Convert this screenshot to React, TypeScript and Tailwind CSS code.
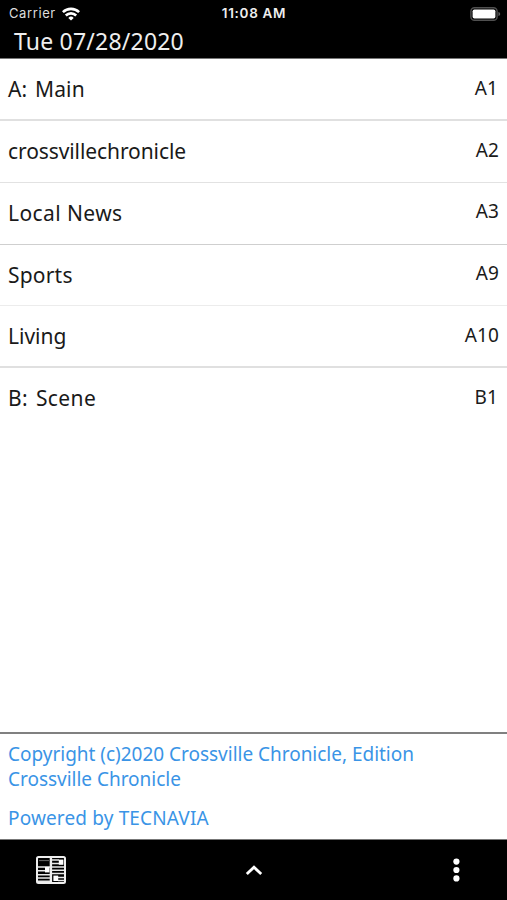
type Section = {
  title: string;
  page: string;
  titleClass: string;
  pageClass: string;
  rowClass: string;
};

const SECTIONS: Section[] = [
  { title: 'A: Main', page: 'A1', titleClass: 'tracking-[0.15px] [word-spacing:2px]', pageClass: 'pt-[14px] pr-[9px]', rowClass: 'h-[62px] border-b-2 border-[#e0e0e0]' },
  { title: 'crossvillechronicle', page: 'A2', titleClass: 'tracking-[-0.09px]', pageClass: 'pt-[14px] pr-2', rowClass: 'h-[62px] border-b border-[#e2e2e2]' },
  { title: 'Local News', page: 'A3', titleClass: 'tracking-[0.42px]', pageClass: 'pt-[13px] pr-2', rowClass: 'h-[62px] border-b border-[#cfcfcf]' },
  { title: 'Sports', page: 'A9', titleClass: 'tracking-[0.2px]', pageClass: 'pt-[13px] pr-2', rowClass: 'h-[61px] border-b border-[#ececec]' },
  { title: 'Living', page: 'A10', titleClass: 'tracking-[0px]', pageClass: 'pt-[14px] pr-2', rowClass: 'h-[62px] border-b-2 border-[#e0e0e0]' },
  { title: 'B: Scene', page: 'B1', titleClass: 'tracking-[0.4px] [word-spacing:2px]', pageClass: 'pt-[14px] pr-[9px]', rowClass: 'h-[62px]' },
];

function WifiIcon() {
  return (
    <svg width="18" height="14" viewBox="0 0 18 14" fill="none" stroke="white" strokeWidth="2.6">
      <path d="M0.9 5.2a11.5 11.5 0 0 1 16.2 0" />
      <path d="M3.8 8.5a7.4 7.4 0 0 1 10.4 0" />
      <path d="M9 13.6L6.3 10.9a3.9 3.9 0 0 1 5.4 0z" fill="white" stroke="none" />
    </svg>
  );
}

function BatteryIcon() {
  return (
    <svg width="31" height="14" viewBox="0 0 31 14" fill="none">
      <rect x="0.9" y="0.7" width="26.2" height="12.6" rx="3.6" stroke="#505050" strokeWidth="1.4" />
      <rect x="2.6" y="2.4" width="22.8" height="9.2" rx="1.8" fill="white" />
      <path d="M28.4 4.9v4.2c1.2-.4 1.8-1.2 1.8-2.1s-.6-1.7-1.8-2.1z" fill="#606060" />
    </svg>
  );
}

function NewspaperIcon() {
  return (
    <svg width="30" height="28" viewBox="0 0 30 28" fill="none">
      <rect x="1" y="1" width="28" height="26" rx="1.5" stroke="#eee" strokeWidth="2" />
      <path d="M14.9 1v26" stroke="#eee" strokeWidth="2.4" />
      <path d="M3 4.6h10" stroke="#666" strokeWidth="1" />
      <path d="M2 11h12M2 14.7h7M2 18.8h12M2 22h12M2 25.2h12" stroke="#e8e8e8" strokeWidth="1.5" />
      <rect x="9" y="11" width="4.5" height="5.4" fill="white" />
      <path d="M16 4h7M16 7.6h7M16 11h12M16 14.3h12M16 17.6h12M22 21.4h6M22 24.6h6" stroke="#e8e8e8" strokeWidth="1.5" />
      <rect x="22.8" y="3.6" width="4.6" height="5.2" fill="white" />
      <rect x="17.4" y="19.6" width="4.8" height="5.4" fill="white" />
    </svg>
  );
}

function Header() {
  return (
    <header className="h-[59px] border-b border-[#777] bg-black text-white">
      <div className="grid h-[27px] grid-cols-3 items-center pr-[6px] pl-[9px] font-['Inter',sans-serif] text-[13px]">
        <div className="flex items-center gap-[6px]">
          <span className="pt-px tracking-[0.6px] text-[#ddd]">Carrier</span>
          <WifiIcon />
        </div>
        <span className="pr-[2px] text-center text-[13.5px] font-semibold tracking-[0.7px] whitespace-nowrap text-[#eee]">11:08 AM</span>
        <div className="flex justify-end">
          <BatteryIcon />
        </div>
      </div>
      <h1 className="pl-[14px] text-[23px] leading-[28px] tracking-[0.2px] text-[#eee]">Tue 07/28/2020</h1>
    </header>
  );
}

function SectionRow({ section }: { section: Section }) {
  return (
    <li className={`flex items-start justify-between pl-2 ${section.rowClass}`}>
      <span className={`pt-[15px] text-[21px] leading-[30px] ${section.titleClass}`}>{section.title}</span>
      <span className={`text-[19px] leading-[30px] tracking-[0.1px] ${section.pageClass}`}>{section.page}</span>
    </li>
  );
}

export default function App() {
  return (
    <div className="flex h-[900px] w-[507px] flex-col overflow-hidden bg-white font-['Noto_Sans',sans-serif] text-[#1a1a1a]">
      <Header />
      <ul className="flex-1">
        {SECTIONS.map((section) => (
          <SectionRow key={section.title} section={section} />
        ))}
      </ul>
      <footer className="h-[107px] border-t-2 border-[#808080] px-2 pt-2 text-[19px] leading-[25px] text-[#3a94e6]">
        <p className="tracking-[-0.02px]">
          <span>Copyright (c)2020 Crossville Chronicle, Edition</span>
          <br />
          <span>Crossville Chronicle</span>
        </p>
        <p className="pt-[14px] tracking-[0.15px]">Powered by TECNAVIA</p>
      </footer>
      <nav className="grid h-[61px] grid-cols-3 items-center border-t border-[#777] bg-black pr-[47px] pl-[36px]">
        <NewspaperIcon />
        <svg width="18" height="12" viewBox="0 0 18 12" fill="none" className="ml-[13px] justify-self-center">
          <path d="M1.8 10L9 3.2l7.2 6.8" stroke="white" strokeWidth="2.8" />
        </svg>
        <svg width="8" height="24" viewBox="0 0 8 24" fill="white" className="justify-self-end">
          <circle cx="4.4" cy="3.6" r="3.1" />
          <circle cx="4.4" cy="12" r="3.1" />
          <circle cx="4.4" cy="20.4" r="3.1" />
        </svg>
      </nav>
    </div>
  );
}
